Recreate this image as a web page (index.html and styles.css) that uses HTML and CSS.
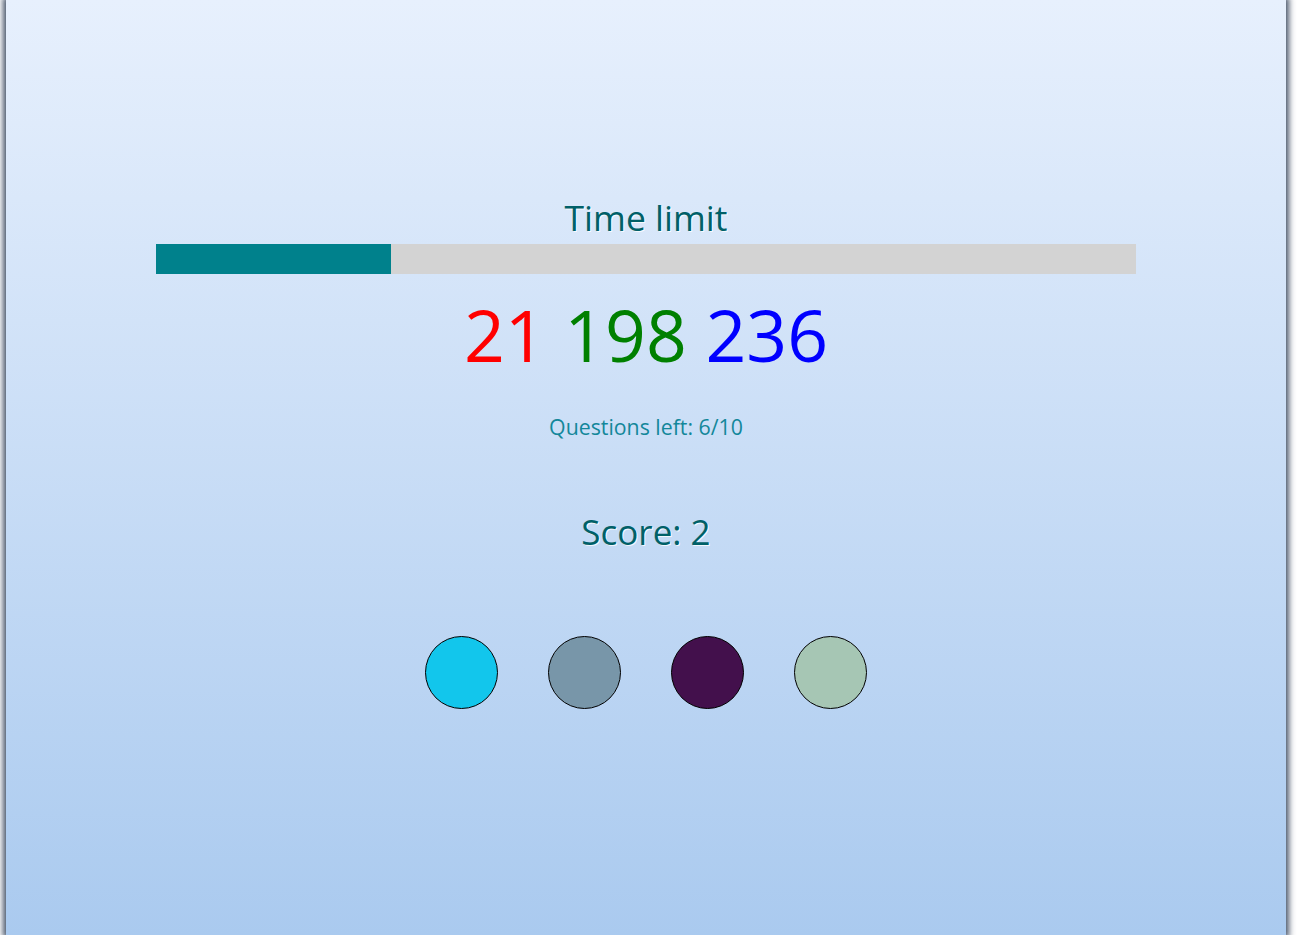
FILE: index.html
```html
<!DOCTYPE html>
<html>
<head>
<meta charset="utf-8">
<link rel="stylesheet" href="styles.css">
</head>
<body>
<div class="page">
  <main class="game">
    <h1 class="title">Time limit</h1>
    <div class="bar"><div class="bar-fill" style="width:24%"></div></div>
    <div class="rgb"><span class="r">21</span> <span class="g">198</span> <span class="b">236</span></div>
    <p class="left">Questions left: 6/10</p>
    <p class="score">Score: 2</p>
    <div class="choices">
      <button class="choice c1"></button>
      <button class="choice c2"></button>
      <button class="choice c3"></button>
      <button class="choice c4"></button>
    </div>
  </main>
</div>
</body>
</html>
```
FILE: styles.css
```css
html, body {
  margin: 0;
  padding: 0;
  background: #ffffff;
  height: 100%;
}
body {
  font-family: "Open Sans", "Noto Sans", sans-serif;
  overflow: hidden;
}
.page {
  width: 1280px;
  height: 935px;
  margin-left: 6px;
  background: linear-gradient(to bottom, #e7f0fd 0%, #aacaef 100%);
  box-shadow: 0 0 6px 3px rgba(40, 55, 80, 0.85);
}
.game {
  display: flex;
  flex-direction: column;
  align-items: center;
  padding-top: 193px;
}
.title {
  margin: 0;
  font-weight: 400;
  font-size: 35.5px;
  line-height: 48px;
  color: #006068;
  text-shadow: 1px 1px 0 rgba(255,255,255,0.8);
  height: 51px;
}
.bar {
  width: 980px;
  height: 30px;
  background: #d3d3d3;
}
.bar-fill {
  height: 100%;
  background: #00818c;
}
.rgb {
  margin-top: 16px;
  font-size: 71.5px;
  line-height: 90px;
  white-space: pre;
}
.r { color: #ff0000; }
.g { color: #008000; }
.b { color: #0000ff; }
.left {
  margin: 32px 0 0;
  font-size: 21.3px;
  line-height: 30px;
  color: #13879a;
}
.score {
  margin: 65px 0 0;
  font-size: 35px;
  line-height: 50px;
  color: #006068;
  text-shadow: 1px 1px 0 rgba(255,255,255,0.8);
}
.choices {
  display: flex;
  gap: 50px;
  margin-top: 79px;
}
.choice {
  width: 73px;
  height: 73px;
  border-radius: 50%;
  border: 1px solid #000;
  padding: 0;
}
.c1 { background: #12c6ec; }
.c2 { background: #7896a9; }
.c3 { background: #43104c; }
.c4 { background: #a6c6b4; }
```
